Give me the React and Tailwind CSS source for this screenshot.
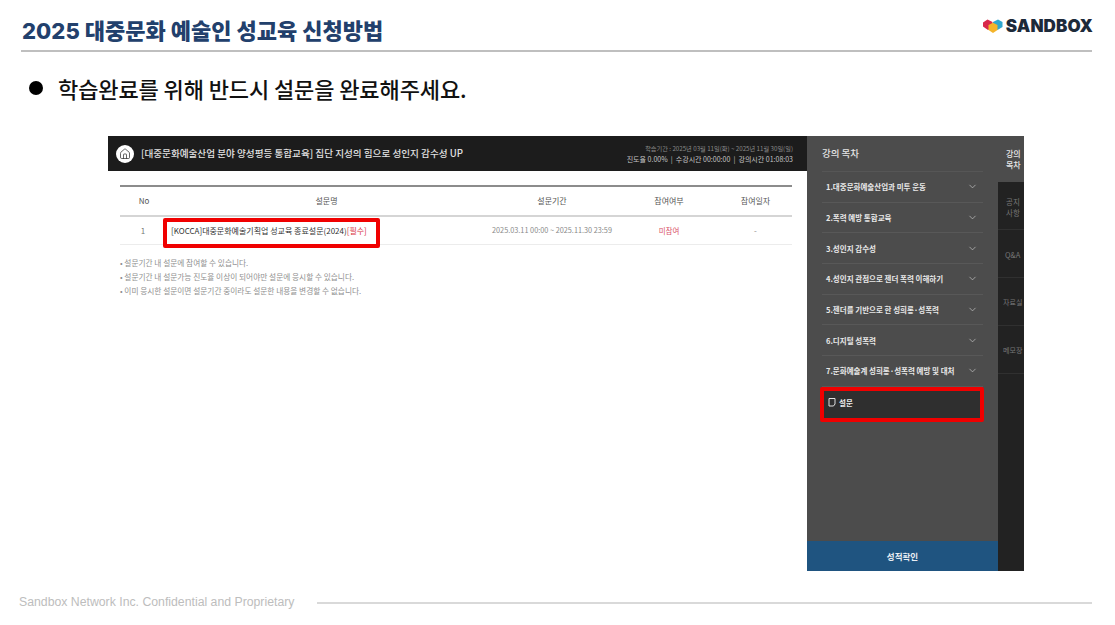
import { ChevronDown, House } from "lucide-react";

const sans = "font-['Noto_Sans_CJK_KR','Noto_Sans',sans-serif]";

const chapters = [
  "1.대중문화예술산업과 미투 운동",
  "2.폭력 예방 통합교육",
  "3.성인지 감수성",
  "4.성인지 관점으로 젠더 폭력 이해하기",
  "5.젠더를 기반으로 한 성희롱·성폭력",
  "6.디지털 성폭력",
  "7.문화예술계 성희롱·성폭력 예방 및 대처",
];

const railItems = [
  { label: "공지\n사항", style: "pl-[8px] text-[7.5px]" },
  { label: "Q&A", style: "pl-[7px] text-[7.5px]" },
  { label: "자료실", style: "pl-[5px] text-[7px]" },
  { label: "메모장", style: "pl-[5px] text-[7px]" },
];

const notes = [
  "설문기간 내 설문에 참여할 수 있습니다.",
  "설문기간 내 설문가능 진도율 이상이 되어야만 설문에 응시할 수 있습니다.",
  "이미 응시한 설문이면 설문기간 중이라도 설문한 내용을 변경할 수 없습니다.",
];

const Logo = () => (
  <svg width="20" height="14" viewBox="0 0 20 14" className="shrink-0">
    <path d="M0 3.5 L4.5 0.5 L9.5 3 L9.5 9 L5 11 L0 7.5 Z" fill="#d8284a" />
    <path d="M10 3 L15 0.5 L19.5 3 L19.5 8 L14.5 11 L10 8.5 Z" fill="#2fa7cf" />
    <path d="M5.5 6 L10 3.8 L14.5 6 L14.5 11 L10 14 L5.5 11 Z" fill="#f4b42a" />
  </svg>
);

const Slide = () => (
  <div className={`flex h-[435px] w-[916px] ${sans}`}>
    {/* left content */}
    <div className="flex w-[699px] flex-col bg-white">
      <div className="flex h-[35px] items-center justify-between bg-[#1c1c1c] pl-[8px] pr-[14px]">
        <div className="flex items-center gap-[7px]">
          <div className="flex h-[18px] w-[18px] items-center justify-center rounded-full bg-white">
            <House size={12} strokeWidth={1.5} color="#333333" />
          </div>
          <span className="text-[9.6px] font-medium text-[#e2e2e2]">
            [대중문화예술산업 분야 양성평등 통합교육] 집단 지성의 힘으로 성인지 감수성 UP
          </span>
        </div>
        <div className="flex flex-col items-end leading-[10px]">
          <span className="text-[6.2px] text-[#8a8a8a]">
            학습기간 : 2025년 03월 11일(화) ~ 2025년 11월 30일(일)
          </span>
          <span className="text-[7px] text-[#c4c4c4]">
            진도율 0.00% &nbsp;|&nbsp; 수강시간 00:00:00 &nbsp;|&nbsp; 강의시간 01:08:03
          </span>
        </div>
      </div>

      <div className="ml-[12px] mr-[15px] mt-[14px] border-t-2 border-[#8c8c8c]">
        <div className="flex h-[30px] items-center border-b-2 border-[#d5d5d5] text-[8px] text-[#555555]">
          <div className="w-[48px] text-center">No</div>
          <div className="w-[317px] text-center">설문명</div>
          <div className="w-[134px] text-center">설문기간</div>
          <div className="w-[100px] text-center">참여여부</div>
          <div className="w-[73px] text-center">참여일자</div>
        </div>
        <div className="relative flex h-[28px] items-center border-b border-[#ececec] text-[8px]">
          <div className="w-[46px] text-center text-[#777777]">1</div>
          <div className="w-[319px] whitespace-nowrap pl-[5px] text-[8px] text-[#333333]">
            [KOCCA]대중문화예술기획업 성교육 종료설문(2024)<span className="text-[#d9333f]">[필수]</span>
          </div>
          <div className="w-[134px] whitespace-nowrap text-center text-[7.3px] text-[#8a8a8a]">
            2025.03.11 00:00 ~ 2025.11.30 23:59
          </div>
          <div className="w-[100px] text-center text-[7.5px] text-[#d9536a]">미참여</div>
          <div className="w-[73px] text-center text-[#888888]">-</div>
          <div className="absolute left-[43px] top-[1px] h-[30px] w-[217px] rounded-[2px] border-[4px] border-[#f00000]" />
        </div>
        <ul className="mt-[12px] flex flex-col gap-[3px] text-[7.7px] leading-[11px] text-[#8f8f8f]">
          {notes.map((note) => (
            <li key={note}>• {note}</li>
          ))}
        </ul>
      </div>
    </div>

    {/* chapter list */}
    <div className="flex w-[191px] flex-col bg-[#4c4c4c]">
      <div className="mx-[15px] flex h-[36px] items-center border-b border-[#565656] pb-[1px] text-[9.5px] font-medium text-[#e4e4e4]">
        강의 목차
      </div>
      {chapters.map((chapter) => (
        <div
          key={chapter}
          className="mx-[15px] flex h-[30.7px] items-center justify-between border-b border-[#585858] pl-[4px] pr-[5px] text-[7.5px] font-bold text-[#e8e8e8]"
        >
          <span className="whitespace-nowrap">{chapter}</span>
          <ChevronDown size={11} color="#c8c8c8" strokeWidth={1.5} />
        </div>
      ))}
      <div className="ml-[13px] flex h-[35px] w-[164px] items-center gap-[3px] rounded-[2px] border-[4px] border-[#f00000] bg-[#2f2f2f] pb-[4px] pl-[4px] text-[7.5px] font-bold text-[#e8e8e8]">
        <svg width="8" height="9" viewBox="0 0 8 9" fill="none" stroke="#e0e0e0" strokeWidth="1">
          <path d="M1 0.5 H7 V6 L5.5 8 H1 Z" />
        </svg>
        설문
      </div>
      <div className="mt-auto flex h-[30px] items-center justify-center bg-[#1f5480] text-[8.5px] font-bold text-[#e9eef3]">
        성적확인
      </div>
    </div>

    {/* right rail */}
    <div className="flex w-[26px] flex-col overflow-hidden bg-[#222222]">
      <div className="flex h-[46px] items-center whitespace-pre-line bg-[#4c4c4c] pl-[8px] text-[8px] font-medium leading-[11px] text-[#e6e6e6]">
        {"강의\n목차"}
      </div>
      {railItems.map((item) => (
        <div
          key={item.label}
          className={`flex h-[48px] shrink-0 items-center border-b border-[#303030] pt-[2px] ${item.style} leading-[11px] text-[#777777]`}
        >
          <span className="whitespace-pre">{item.label}</span>
        </div>
      ))}
    </div>
  </div>
);

export default function App() {
  return (
    <div className="flex h-[625px] w-[1115px] flex-col overflow-hidden bg-white">
      <header className="mx-[21px] mt-[16px] flex h-[36px] w-[1071px] items-center justify-between border-b-2 border-[#bfbfbf] pb-[5px]">
        <h1 className="pl-[1px] font-['Inter','Noto_Sans_CJK_KR',sans-serif] text-[22px] font-extrabold leading-none tracking-[0.05px] text-[#22406c]">
          2025 대중문화 예술인 성교육 신청방법
        </h1>
        <div className="-mr-[1px] -mt-[9px] flex items-center gap-[3px]">
          <Logo />
          <span className="font-['Inter',sans-serif] text-[17px] font-black leading-none tracking-[0.1px] text-[#1d2a3a]">
            SANDBOX
          </span>
        </div>
      </header>

      <div className="ml-[29px] mt-[23px] flex items-center gap-[15px]">
        <span className="h-[14px] w-[14px] rounded-full bg-black" />
        <p className="font-['Noto_Sans_CJK_KR',sans-serif] text-[22px] font-medium leading-[26px] tracking-[-0.1px] text-[#111111]">
          학습완료를 위해 반드시 설문을 완료해주세요.
        </p>
      </div>

      <div className="ml-[108px] mt-[35px]">
        <Slide />
      </div>

      <footer className="ml-[19px] mt-[23px] flex items-center gap-[23px]">
        <span className="font-['Liberation_Sans',sans-serif] text-[12.27px] leading-[16px] text-[#bdbdbd]">
          Sandbox Network Inc. Confidential and Proprietary
        </span>
        <div className="mt-[2px] h-[2px] w-[775px] bg-[#d9d9d9]" />
      </footer>
    </div>
  );
}
